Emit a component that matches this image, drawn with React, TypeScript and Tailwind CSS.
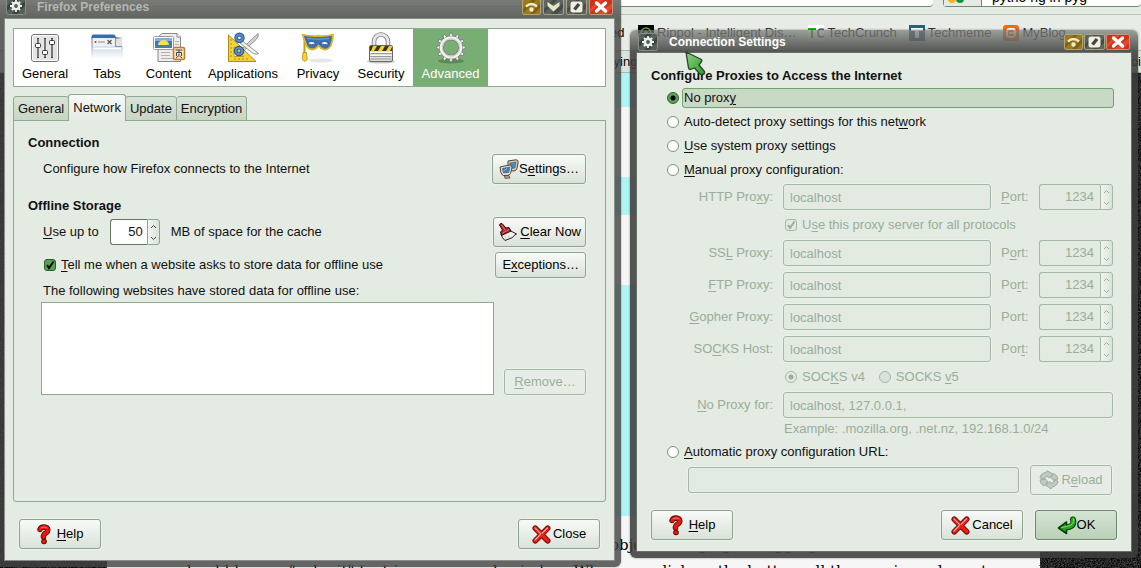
import React from 'react';

type Kids = { children?: React.ReactNode };

/* ---------- icons ---------- */

function MonitorsIcon() {
  return (
    <svg width="20" height="20" viewBox="0 0 20 20" aria-hidden="true">
      <path d="M9 2 L17 .8 Q19.5 1 19.2 3 L18 9.500 Q17 12.500 14 12 L9 11z" fill="#d5cfbd" stroke="#4b463c" />
      <path d="M11 4 L17 3 L16 9 L11 9.500z" fill="#4d88bd" stroke="#57606a" strokeWidth=".7" />
      <path d="M1 8 L10.500 6 Q13.500 6 13 9 L11.500 14.500 Q10.500 16.500 8 16.500 L4.500 16.500 Q2.500 16 1.800 13z" fill="#e6e0cf" stroke="#4b463c" />
      <path d="M3.300 9.500 L11 8 L9.700 13.500 L4.500 14z" fill="#3f7fbb" stroke="#57606a" strokeWidth=".7" />
      <path d="M5.500 17 L10 16.500 L11 19 L6 19.300z" fill="#b5ae9a" stroke="#4b463c" strokeWidth=".8" />
      <path d="M4.500 12 L8 9.500" stroke="#8cb8df" />
    </svg>
  );
}

function BrushIcon() {
  return (
    <svg width="20" height="20" viewBox="0 0 20 20" aria-hidden="true">
      <path d="M3 12 L11 8 L18.500 12 Q16 13 14.500 15.500 L7 18.500 Q4 16 3 12z" fill="#f3f0ee" stroke="#1c1a1a" />
      <path d="M1.500 3 Q2 1 4 1.500 L8 6 L11 5.500 L13 9 L3.500 13.500 L2.500 10 L4.500 8z" fill="#b3262b" stroke="#1d0b0b" />
      <path d="M3.500 3 L7 8 M4.500 11 L11 7.500" stroke="#e0726f" />
      <path d="M7 14 l1 3 M10 13 l1 3" stroke="#c9c2c2" />
    </svg>
  );
}

function HelpIcon() {
  const hook = 'M3 5.500Q4 3 7 3Q11 3.200 10.800 6Q10.500 8.500 8 9.500Q6 11 6.500 13';
  return (
    <svg width="14" height="21" viewBox="0 0 14 21" aria-hidden="true">
      <g fill="none" strokeLinecap="round">
        <path d={hook} stroke="#4a0805" strokeWidth="5.400" />
        <circle cx="7" cy="17.500" r="2.800" fill="#4a0805" />
        <path d={hook} stroke="#f0150d" strokeWidth="3.600" />
        <circle cx="7" cy="17.500" r="1.900" fill="#f0150d" />
        <path d="M4 3.800Q7 1.700 10 3.800" stroke="#ff8a7c" strokeWidth=".9" />
      </g>
    </svg>
  );
}

function CrossIcon() {
  return (
    <svg width="19" height="19" viewBox="0 0 19 19" aria-hidden="true">
      <path d="M3.300 3.300 L15.700 15.700 M15.700 3.300 L3.300 15.700" stroke="#5a0a06" strokeWidth="5.600" strokeLinecap="round" />
      <path d="M3.300 3.300 L15.700 15.700 M15.700 3.300 L3.300 15.700" stroke="#ea1d12" strokeWidth="4" strokeLinecap="round" />
      <path d="M3 2.800 L8.500 8.300 M15.500 2.800 L10 8.300 M8.300 9.700 L3 15" stroke="#ffb3a8" strokeWidth="1.100" strokeLinecap="round" />
    </svg>
  );
}

function ReturnIcon() {
  return (
    <svg width="20" height="19" viewBox="0 0 20 19" aria-hidden="true">
      <g fill="none" strokeLinejoin="round" strokeLinecap="round">
        <path d="M16 3.500Q18 10.500 9.500 11.500" stroke="#0d3c0a" strokeWidth="6" />
        <path d="M9.500 6L1.500 12L9.500 17.500z" fill="#24a51b" stroke="#0d3c0a" strokeWidth="1.600" />
        <path d="M16 3.500Q18 10.500 8.500 11.500" stroke="#24a51b" strokeWidth="4.200" />
        <path d="M16.500 2.500Q18 9.500 9.500 10.500L4.500 11.500" stroke="#7fdc70" />
      </g>
    </svg>
  );
}

function ReloadIcon() {
  return (
    <svg width="20" height="20" viewBox="0 0 20 20" aria-hidden="true">
      <g fill="#c2c9c1" stroke="#a0aa9f" strokeLinejoin="round">
        <path d="M1 8 Q1.500 3 7 2.500 L8 .8 L14 4 L9.500 8 L8.500 6 Q6 6.500 5.500 9z" />
        <path d="M19 11 Q18.500 16 13 17 L12 19 L6.500 15 L11 11.500 L12 13.500 Q14.500 13 15 10.500z" />
        <path d="M1 10 L6.500 9 L9 12 Q7 12.500 7.500 14 L4.500 16 Q1.500 14 1 10z" />
        <path d="M14.500 3.500 Q18.500 5 19 9 L14.500 10 L11.500 7.500z" />
      </g>
    </svg>
  );
}

function SlidersIcon() {
  return (
    <svg width="32" height="32" viewBox="0 0 32 32" aria-hidden="true">
      <rect x="2.500" y="2.500" width="27" height="27" rx="2.500" fill="#e4e4e2" stroke="#777" />
      <rect x="3.500" y="3.500" width="25" height="25" rx="1.500" fill="none" stroke="#fff" />
      <path d="M9 6v20 M16 6v20 M23 6v20" stroke="#444" strokeWidth="2" />
      <path d="M9 7v18 M16 7v18 M23 7v18" stroke="#ddd" strokeWidth=".7" />
      <rect x="6.500" y="11.500" width="5" height="4" rx="1" fill="#fff" stroke="#333" />
      <rect x="13.500" y="18.500" width="5" height="4" rx="1" fill="#fff" stroke="#333" />
      <rect x="20.500" y="8.500" width="5" height="4" rx="1" fill="#fff" stroke="#333" />
    </svg>
  );
}

function TabsIcon() {
  return (
    <svg width="32" height="32" viewBox="0 0 32 32" aria-hidden="true">
      <defs>
        <linearGradient id="tabSide" x1="0" y1="0" x2="1" y2="0">
          <stop offset="0" stopColor="#777" />
          <stop offset="1" stopColor="#fff" />
        </linearGradient>
        <linearGradient id="tabPage" x1="0" y1="0" x2="0" y2="1">
          <stop offset="0" stopColor="#e9eef4" />
          <stop offset=".5" stopColor="#d2dfee" />
          <stop offset="1" stopColor="#fff" />
        </linearGradient>
        <linearGradient id="tabEdge" x1="0" y1="0" x2="0" y2="1">
          <stop offset="0" stopColor="#5a6f8c" />
          <stop offset="1" stopColor="#fff" />
        </linearGradient>
      </defs>
      <path d="M24 5h8v10h-8z" fill="url(#tabSide)" />
      <path d="M25 7h6v7h-6z" fill="#e2e2e0" />
      <path d="M.5 5h23.500v9.500H32V27H.5z" fill="url(#tabPage)" />
      <path d="M.5 5h1v22h-1z" fill="url(#tabEdge)" />
      <path d="M24.500 5v9.500H31" fill="none" stroke="#8593a5" />
      <path d="M.5 6V4.500q0-2 2-2h20q2 0 2.500 3.500z" fill="#3a6cab" />
      <path d="M2 7h21.500v7H2z" fill="#f0f1f2" />
      <circle cx="4.500" cy="10" r="1.100" fill="#c33" />
      <path d="M7 10h7" stroke="#aaa" strokeWidth="1.500" />
      <path d="M16.500 8l4 4m0-4l-4 4" stroke="#555" strokeWidth="1.200" />
      <path d="M2 16.500h28" stroke="#fff" strokeWidth="1.500" />
    </svg>
  );
}

function ContentIcon() {
  return (
    <svg width="34" height="32" viewBox="0 0 34 32" aria-hidden="true">
      <path d="M10 1.500H25L28.500 5V29.500H6V5z" fill="#ededeb" stroke="#888" />
      <path d="M25 1.500V5h3.500" fill="#fff" stroke="#888" />
      <path d="M9 20.500h9 M9 23.500h9 M9 26.500h13 M23 9.500h4 M23 12.500h4 M9 17.500h15" stroke="#b0b0ae" />
      <rect x="1.500" y="4.500" width="20" height="13" rx="1" fill="#fff" stroke="#9a9a9a" />
      <rect x="3" y="6" width="17" height="10" fill="#3c78bd" />
      <path d="M3 6h17v3H3z" fill="#7fb0df" />
      <path d="M6 13a5.500 5 0 0 1 11 0z" fill="#f3e04a" />
      <path d="M3 13h17v3H3z" fill="#4f79a8" />
      <rect x="21.500" y="15.500" width="11" height="12" rx="1.500" fill="#f6e3c5" stroke="#c87a1e" strokeWidth="1.500" />
      <path d="M23.500 18h7 M27 18v2 M24.500 20.500h5v3.500 M24.500 20.500V24 M27 21.500v2l-3 2.500 M27.500 24l2.500 2" stroke="#444" fill="none" />
    </svg>
  );
}

function ApplicationsIcon() {
  return (
    <svg width="32" height="32" viewBox="0 0 32 32" aria-hidden="true">
      <path d="M1.500 3V29.500H29z" fill="#f3d338" stroke="#ad8a12" />
      <path d="M7 15V24.500H17z" fill="#fff" stroke="#c19e1b" />
      <path d="M3 8h2M3 12h2M3 16h2M3 20h2M3 24h2M8 28v-2M12 28v-2M16 28v-2M20 28v-2" stroke="#ad8a12" />
      <path d="M14 17.500L31 1.500Q32.500 5 27 9.500L16 19.500z" fill="#d4d4d2" stroke="#777" strokeWidth=".8" />
      <path d="M14 8L31.500 21.500Q28 23.500 23 19L13 11z" fill="#f3f3f1" stroke="#777" strokeWidth=".8" />
      <circle cx="12.500" cy="5.800" r="3.300" fill="none" stroke="#234a86" strokeWidth="3.800" />
      <circle cx="12.500" cy="5.800" r="3.300" fill="none" stroke="#5e8ecb" strokeWidth="2" />
      <circle cx="12" cy="19" r="3.300" fill="none" stroke="#234a86" strokeWidth="3.800" />
      <circle cx="12" cy="19" r="3.300" fill="none" stroke="#5e8ecb" strokeWidth="2" />
    </svg>
  );
}

function MaskIcon() {
  return (
    <svg width="34" height="32" viewBox="0 0 34 32" aria-hidden="true">
      <ellipse cx="20" cy="28.500" rx="12" ry="2" fill="#e6e6e6" />
      <path d="M3.500 6V22" stroke="#c49d13" strokeWidth="2" />
      <path d="M2 20.500h3.500l.8 7-2.500 2-2.500-2z" fill="#f3d338" stroke="#b08e12" strokeWidth=".8" />
      <path d="M1.500 2.500Q8 4.500 17 4Q26 4.500 32 2.500Q32 8 30 13Q28 18 23 17.500Q19.500 16.500 17.500 13.500Q15 17.500 11 17.500Q6 17 4.500 11z" fill="#3f6fb3" stroke="#dcb821" strokeWidth="1.800" strokeLinejoin="round" />
      <path d="M6.500 11.500Q10.500 7.500 15 11.500Q10.500 14 6.500 11.500z M19.500 11.500Q23.500 7.500 28 11.500Q24 14 19.500 11.500z" fill="#fff" stroke="#234a86" strokeWidth=".8" />
      <path d="M6 6.500Q17 8 28 6.500" stroke="#7ba3d8" fill="none" />
    </svg>
  );
}

function PadlockIcon() {
  return (
    <svg width="32" height="32" viewBox="0 0 32 32" aria-hidden="true">
      <ellipse cx="16" cy="29.500" rx="14" ry="2" fill="#c9c9c7" />
      <path d="M9 15V9.500a7 7 0 0 1 14 0V15" fill="none" stroke="#777" strokeWidth="4.600" />
      <path d="M9 15V9.500a7 7 0 0 1 14 0V15" fill="none" stroke="#e6e6e4" strokeWidth="3" />
      <rect x="4.500" y="13.500" width="23" height="16" rx="1.500" fill="#dededc" stroke="#666" />
      <rect x="5" y="14" width="22" height="5" fill="#f4d31f" />
      <path d="M5 14h3l-2 5H5zM12 14h4l-3 5h-4zM20 14h4l-3 5h-4zM27 15v4h-2z" fill="#3a3320" />
      <path d="M5.500 21.500h21M5.500 24.500h21M5.500 27h21" stroke="#999" />
      <path d="M5.500 20.500h21M5.500 23.500h21" stroke="#fff" />
    </svg>
  );
}

const teeth = [0, 30, 60, 90, 120, 150, 180, 210, 240, 270, 300, 330];

function GearIcon() {
  return (
    <svg width="32" height="32" viewBox="0 0 32 32" aria-hidden="true">
      <ellipse cx="16" cy="29" rx="13" ry="2.500" fill="#5a8a55" />
      {teeth.map((a) => (
        <path key={a} d="M13.800 5.500L15 1.200h2l1.200 4.300z" fill="#f1f1ef" stroke="#777" strokeWidth=".8" transform={`rotate(${a} 16 15.500)`} />
      ))}
      <circle cx="16" cy="15.500" r="9.500" fill="none" stroke="#777" strokeWidth="4.400" />
      <circle cx="16" cy="15.500" r="9.700" fill="none" stroke="#f1f1ef" strokeWidth="3.200" />
      <circle cx="16" cy="15.500" r="8.700" fill="none" stroke="#c4c4c2" />
    </svg>
  );
}

function WindowMenuIcon() {
  return (
    <svg width="20" height="18" viewBox="0 0 20 18" aria-hidden="true">
      <rect x=".5" y=".5" width="19" height="17" rx="2" fill="#56605a" stroke="#85918a" />
      <path d="M1 9L9 1h5L1 14zM6 17L19 4v5l-8 8z" fill="#38413b" />
      <circle cx="10" cy="9" r="3.200" fill="none" stroke="#eef0ea" strokeWidth="2.400" />
      <path d="M10 3v2.500M10 12.500V15M4 9h2.500M13.500 9H16M5.800 4.800l1.700 1.700M12.500 11.500l1.700 1.700M14.200 4.800l-1.700 1.700M7.500 11.500l-1.700 1.700" stroke="#eef0ea" strokeWidth="1.800" />
    </svg>
  );
}

type FrameAction = 'Shade' | 'Minimize' | 'Maximize' | 'Close';

function FrameButton({ action }: { action: FrameAction }) {
  const gray = action === 'Minimize' || action === 'Maximize';
  const fill = action === 'Shade' ? '#9a7a1c' : action === 'Close' ? '#cf3018' : '#5b645f';
  const dark = action === 'Shade' ? '#7d6110' : action === 'Close' ? '#e2492d' : '#444c48';
  const width = action === 'Close' ? 24 : gray ? 21 : 19;
  const mid = width / 2;
  return (
    <button type="button" aria-label={action} className="flex">
      <svg width={width} height="16" viewBox={`0 0 ${width} 16`} aria-hidden="true">
        <rect x=".5" y=".5" width={width - 1} height="15" rx="1.500" fill={fill} stroke="#c3b98f" strokeOpacity=".7" />
        <path d={`M1 10L10 1h4L1 14zM8 15L${width - 1} 4v5l-6 6z`} fill={dark} />
        {action === 'Shade' && (
          <g fill="none" stroke="#f2edcf" strokeWidth="2.400">
            <path d={`M${mid - 5.5} 7.500Q${mid} 2.500 ${mid + 5.5} 7.500`} />
            <circle cx={mid} cy="10.500" r="1" />
          </g>
        )}
        {action === 'Minimize' && <path d={`M${mid - 6} 3L${mid} 7L${mid + 6} 3V7L${mid} 12.500L${mid - 6} 7z`} fill="#e8e5c4" />}
        {action === 'Maximize' && (
          <g>
            <rect x={mid - 6} y="2.500" width="12" height="11" rx="2.500" fill="#f0efe0" />
            <path d={`M${mid - 2} 10.500L${mid + 2.5} 5`} stroke="#444" strokeWidth="3.400" />
          </g>
        )}
        {action === 'Close' && <path d={`M${mid - 4.5} 4L${mid + 4.5} 12M${mid + 4.5} 4L${mid - 4.5} 12`} stroke="#fff" strokeWidth="3.400" strokeLinecap="round" />}
      </svg>
    </button>
  );
}

function Pointer() {
  return (
    <svg className="absolute left-[684px] top-[50px]" width="24" height="28" viewBox="0 0 24 28" aria-hidden="true">
      <defs>
        <linearGradient id="pointerFill" x1="0" y1="0" x2="1" y2="1">
          <stop offset="0" stopColor="#8fd08a" />
          <stop offset="1" stopColor="#25a01f" />
        </linearGradient>
      </defs>
      <path d="M2 2L17.500 9.500Q18.500 10.500 17.500 11.500L15 15L20.500 21.500Q21 23.500 18.500 24.500Q16 25 15 23L10.500 18L6.500 19.500Q5 19.500 4.500 18z" fill="url(#pointerFill)" stroke="#2e3f2d" strokeWidth="1.300" strokeLinejoin="round" />
    </svg>
  );
}

/* ---------- controls ---------- */

function U({ children }: Kids) {
  return <span className="underline underline-offset-2">{children}</span>;
}

type PushProps = Kids & { icon?: React.ReactNode; tone?: 'normal' | 'default' | 'disabled'; short?: boolean; tight?: boolean };

function PushButton({ icon, tone = 'normal', short, tight, children }: PushProps) {
  const look = {
    normal: 'border-[#8fa48f] bg-linear-to-b from-[#f8faf7] via-[#e9eee8] to-[#d9e2d8] text-black',
    default: 'border-[#6d8a6c] bg-linear-to-b from-[#d5e4d3] via-[#c8dac6] to-[#b9d0b6] text-black',
    disabled: 'border-[#a5b8a4] bg-[#e7ede6] text-[#9aad99]',
  }[tone];
  return (
    <button
      type="button"
      disabled={tone === 'disabled'}
      className={`flex min-w-[82px] items-center justify-center rounded-[3px] border shadow-[0_0_0_1px_rgba(240,245,240,0.6)] ${short ? 'h-[26px]' : 'h-[30px]'} ${tight ? 'px-1' : 'px-1.5'} ${look}`}
    >
      {icon}
      <span className="whitespace-nowrap">{children}</span>
    </button>
  );
}

function Arrows({ disabled }: { disabled?: boolean }) {
  const tone = disabled ? 'border-[#a5b8a4] text-[#9aad99]' : 'border-[#8fa48f] text-[#444]';
  return (
    <span className={`flex w-[13px] shrink-0 flex-col rounded-r-[3px] border bg-linear-to-r from-[#f1f5f0] to-[#d9e2d8] ${tone}`}>
      {['Increase', 'Decrease'].map((name, i) => (
        <button key={name} type="button" aria-label={name} disabled={disabled} className="flex flex-1 items-center justify-center">
          <svg width="7" height="5" viewBox="0 0 7 5" aria-hidden="true">
            <path d={i === 0 ? 'M1 4L3.500 1.500L6 4' : 'M1 1L3.500 3.500L6 1'} fill="none" stroke="currentColor" />
          </svg>
        </button>
      ))}
    </span>
  );
}

function CheckBox({ id, disabled }: { id: string; disabled?: boolean }) {
  return (
    <span className="relative flex size-3">
      <input
        id={id}
        type="checkbox"
        defaultChecked
        disabled={disabled}
        className="size-3 appearance-none rounded-[3px] border border-[#2f5c2d] bg-[#55a552] disabled:border-[#a5b8a4] disabled:bg-[#e1e9e0]"
      />
      <svg className="pointer-events-none absolute inset-0" width="12" height="12" viewBox="0 0 12 12" aria-hidden="true">
        <path d="M3 6L5 9L9.500 2.500" fill="none" stroke={disabled ? '#9aad99' : '#000'} strokeWidth="2" />
      </svg>
    </span>
  );
}

function Radio({ id, name, checked, disabled }: { id: string; name: string; checked?: boolean; disabled?: boolean }) {
  return (
    <input
      id={id}
      name={name}
      type="radio"
      defaultChecked={checked}
      disabled={disabled}
      className="size-3 shrink-0 appearance-none rounded-full border border-[#7c937b] bg-white checked:border-[#2f5c2d] checked:bg-[radial-gradient(circle,#000_0_2px,#5aa556_3px)] disabled:border-[#a5b8a4] disabled:bg-[#d9e3d8] disabled:checked:border-[#a5b8a4] disabled:checked:bg-[radial-gradient(circle,#9aad99_0_2px,#e4ebe3_3px)]"
    />
  );
}

const field = 'h-[26px] w-full min-w-0 rounded-[3px] border border-[#a5b8a4] bg-[#e3eae2] px-1.5 text-[#9aad99] shadow-[0_0_0_1px_rgba(240,245,240,0.6)]';

function ProxyRow({ id, label, portLabel }: { id: string; label: React.ReactNode; portLabel: React.ReactNode }) {
  return (
    <>
      <label htmlFor={id} className="text-right">{label}</label>
      <input id={id} disabled defaultValue="localhost" className={field} />
      <label htmlFor={`${id}-port`}>{portLabel}</label>
      <span className="flex h-[26px]">
        <input
          id={`${id}-port`}
          disabled
          defaultValue="1234"
          className="w-full min-w-0 rounded-l-[3px] border border-r-0 border-[#a5b8a4] bg-[#e3eae2] pr-1.5 text-right"
        />
        <Arrows disabled />
      </span>
    </>
  );
}

/* ---------- desktop background ---------- */

function Bookmark({ icon, children }: Kids & { icon: React.ReactNode }) {
  return (
    <a href="#bookmark" className="flex items-center gap-[3px] whitespace-nowrap">
      {icon}
      {children}
    </a>
  );
}

function Browser() {
  return (
    <div className="relative text-[13px] text-[#333]">
      <div className="flex h-[7px] gap-2.5 overflow-hidden bg-[#e4ebe3]">
        <div className="w-[933px] shrink-0 rounded-b border-b border-[#6f8a6e] bg-white" />
        <div className="flex flex-1 items-start rounded-b border-b border-l border-[#6f8a6e] bg-white leading-[10px] text-black">
          <svg width="38" height="6" viewBox="0 0 38 6" aria-hidden="true">
            <path d="M0 0h38v6H0z" fill="#e4ebe3" />
            <circle cx="8" cy="-1" r="4" fill="#f5b021" />
            <circle cx="16" cy="-1" r="4" fill="#17903b" />
            <path d="M37.500 0v6" stroke="#6f8a6e" />
          </svg>
          <span className="-mt-2 ml-2.5 text-[14px]">pytho ng in pyg</span>
        </div>
      </div>
      <div className="h-[8px] border-b border-[#b5c4b4] bg-[#e4ebe3]" />
      <div className="flex h-[36px] items-center border-b border-[#a8baa7] bg-[#e7ede6] pl-[610px]">
        <span className="w-7 text-black">ed</span>
        <div className="flex gap-3">
          <Bookmark
            icon={
              <svg width="16" height="16" viewBox="0 0 16 16" aria-hidden="true">
                <rect width="16" height="16" fill="#000" />
                <circle cx="8" cy="8" r="5" fill="none" stroke="#65a33a" strokeWidth="1.500" />
                <circle cx="8" cy="8" r="2" fill="#a85fc0" />
              </svg>
            }
          >
            Rippol - Intelligent Dis…
          </Bookmark>
          <Bookmark
            icon={
              <svg width="16" height="16" viewBox="0 0 16 16" aria-hidden="true">
                <rect width="16" height="16" fill="#fff" />
                <path d="M0 3h8v2H5v8H3V5H0z" fill="#13b613" />
                <path d="M16 4.500Q10 2.500 10 8Q10 13.500 16 11.500" fill="none" stroke="#555" strokeWidth="1.500" />
              </svg>
            }
          >
            TechCrunch
          </Bookmark>
          <Bookmark
            icon={
              <svg width="16" height="16" viewBox="0 0 16 16" aria-hidden="true">
                <rect width="16" height="16" fill="#2d5f7c" />
                <path d="M2 3h12v3h-4v7H6V6H2z" fill="#fff" />
              </svg>
            }
          >
            Techmeme
          </Bookmark>
          <Bookmark
            icon={
              <svg width="16" height="16" viewBox="0 0 16 16" aria-hidden="true">
                <rect width="16" height="16" rx="3" fill="#fb6a0a" />
                <rect x="4" y="4" width="8" height="8" rx="2.500" fill="none" stroke="#fff" strokeWidth="1.800" />
                <path d="M6 8h5" stroke="#fff" strokeWidth="1.500" />
              </svg>
            }
          >
            MyBlog
          </Bookmark>
        </div>
      </div>
      <div className="flex h-[22px] items-center justify-between border-b border-[#a8baa7] bg-[#dbe4da] pl-[610px] text-black">
        <span>fying</span>
        <span>oi</span>
      </div>
      <div className="ml-[107px] w-[933px] bg-[#f6f6f6] font-['DejaVu_Serif',serif] text-[15px] text-black">
        <div className="h-[34px] bg-[#b0f5f5]" />
        <div className="h-[70px]" />
        <div className="h-[38px] bg-[#b0f5f5]" />
        <div className="h-[70px]" />
        <div className="h-[231px] bg-[#b0f5f5]" />
        <div className="overflow-hidden pt-4 leading-[26px] whitespace-nowrap">
          <p className="pl-[503px]">object changing debugging</p>
          <p className="pl-[72px]">should have a "submit" text in your search window. When you click on the button, all the previous characters and</p>
        </div>
      </div>
    </div>
  );
}

function Grain() {
  return (
    <svg className="absolute inset-0 size-full" aria-hidden="true">
      <filter id="grain" colorInterpolationFilters="sRGB">
        <feTurbulence type="fractalNoise" baseFrequency=".7" numOctaves="2" />
        <feColorMatrix values=".6 0 0 0 -.16 .6 0 0 0 -.16 .6 0 0 0 -.16 0 0 0 0 1" />
      </filter>
      <rect width="100%" height="100%" filter="url(#grain)" />
    </svg>
  );
}

/* ---------- windows ---------- */

const categories = [
  { name: 'General', icon: <SlidersIcon /> },
  { name: 'Tabs', icon: <TabsIcon /> },
  { name: 'Content', icon: <ContentIcon /> },
  { name: 'Applications', icon: <ApplicationsIcon /> },
  { name: 'Privacy', icon: <MaskIcon /> },
  { name: 'Security', icon: <PadlockIcon /> },
  { name: 'Advanced', icon: <GearIcon /> },
];

function Preferences() {
  return (
    <section aria-label="Firefox Preferences" className="absolute left-0 top-0 w-[621px] rounded-br-md shadow-[0_0_2px_rgba(0,0,0,0.4)]">
      <header className="flex h-[19px] items-start justify-between overflow-hidden bg-linear-to-b from-[#71746f]/95 to-[#5c5d5b]/95 pl-1.5 pr-2">
        <div className="flex gap-[11px]">
          <div className="-mt-[3px]"><WindowMenuIcon /></div>
          <h1 className="text-[12px] leading-[14px] font-bold text-[#b4b7b2]">Firefox Preferences</h1>
        </div>
        <div className="-mt-px flex gap-0.5">
          <FrameButton action="Shade" />
          <FrameButton action="Minimize" />
          <FrameButton action="Maximize" />
          <FrameButton action="Close" />
        </div>
      </header>
      <div className="rounded-br-md border-t-0 border-r-[7px] border-b-[7px] border-l-[5px] border-[#424242]/80">
        <div className="bg-[#e4ebe3] bg-clip-padding px-2 pb-[11px] pt-[9px] outline outline-[#8a8c89]">
          <nav className="grid h-[59px] grid-cols-[62px_62px_61px_88px_62px_64px_75px] border border-[#8fa890] bg-white">
            {categories.map(({ name, icon }) => (
              <button
                key={name}
                type="button"
                className={`flex flex-col items-center pt-[3px] leading-5 ${name === 'Advanced' ? 'bg-[#78ad73] text-white' : 'text-black'}`}
              >
                {icon}
                {name}
              </button>
            ))}
          </nav>
          <div role="tablist" className="relative mt-[7px] flex items-end">
            {['General', 'Network', 'Update', 'Encryption'].map((tab) => (
              <button
                key={tab}
                type="button"
                role="tab"
                aria-selected={tab === 'Network'}
                className={
                  tab === 'Network'
                    ? '-mx-px h-[27px] rounded-t-[3px] border border-b-0 border-[#8fa890] bg-linear-to-b from-[#f6f9f6] to-[#e4ebe3] px-1'
                    : 'h-[25px] rounded-t-[3px] border border-[#8fa890] bg-linear-to-b from-[#d8e2d7] to-[#c8d6c6] px-1 not-first:not-nth-3:border-l-0'
                }
              >
                {tab}
              </button>
            ))}
          </div>
          <div role="tabpanel" className="-mt-px min-h-[382px] rounded-b-[3px] border border-[#8fa890] pb-4 pl-3.5 pr-[19px] pt-3 leading-5">
            <h2 className="font-bold">Connection</h2>
            <div className="flex items-center justify-between pl-[15px] pt-px">
              <p>Configure how Firefox connects to the Internet</p>
              <PushButton icon={<MonitorsIcon />}>S<U>e</U>ttings…</PushButton>
            </div>
            <h2 className="mt-3 font-bold">Offline Storage</h2>
            <div className="flex items-center pl-[15px] pt-px">
              <label htmlFor="cache"><U>U</U>se up to</label>
              <span className="ml-[11px] mr-[11px] flex h-[26px] w-[50px]">
                <input id="cache" defaultValue="50" className="w-full min-w-0 rounded-l-[3px] border border-r-0 border-[#5f7a5e] bg-white pr-1 text-right" />
                <Arrows />
              </span>
              <span className="flex-1">MB of space for the cache</span>
              <PushButton tight icon={<BrushIcon />}><span className="ml-0.5"><U>C</U>lear Now</span></PushButton>
            </div>
            <div className="flex items-center justify-between pl-4 pt-[5px]">
              <span className="flex items-center gap-[5px]">
                <CheckBox id="ask" />
                <label htmlFor="ask"><U>T</U>ell me when a website asks to store data for offline use</label>
              </span>
              <PushButton short>E<U>x</U>ceptions…</PushButton>
            </div>
            <p className="pl-[15px] pt-[3px]">The following websites have stored data for offline use:</p>
            <div className="flex items-end gap-2.5 pl-[13px] pt-px">
              <div role="listbox" aria-label="Websites with stored data" className="h-[93px] flex-1 border border-[#8fa890] bg-white" />
              <PushButton short tone="disabled"><U>R</U>emove…</PushButton>
            </div>
          </div>
          <footer className="mt-[17px] flex justify-between px-1.5">
            <PushButton icon={<HelpIcon />}><span className="ml-1.5"><U>H</U>elp</span></PushButton>
            <PushButton icon={<CrossIcon />}><span className="ml-0.5">Close</span></PushButton>
          </footer>
        </div>
      </div>
    </section>
  );
}

const modes = [
  { id: 'none', label: <>No prox<U>y</U></> },
  { id: 'detect', label: <>Auto-detect proxy settings for this net<U>w</U>ork</> },
  { id: 'system', label: <><U>U</U>se system proxy settings</> },
  { id: 'manual', label: <><U>M</U>anual proxy configuration:</> },
];

function ConnectionSettings() {
  return (
    <section aria-label="Connection Settings" className="absolute left-[630px] top-[30px] w-[508px] rounded-md shadow-[0_0_2px_rgba(0,0,0,0.5)]">
      <header className="flex h-[23px] items-center justify-between rounded-t-md bg-linear-to-b from-[#7b7e79]/70 via-[#5f615e]/85 to-[#4a4b49]/95 pl-2 pr-2">
        <div className="flex items-center gap-[11px]">
          <WindowMenuIcon />
          <h1 className="text-[12px] font-bold text-white">Connection Settings</h1>
        </div>
        <div className="flex gap-px">
          <FrameButton action="Shade" />
          <FrameButton action="Maximize" />
          <FrameButton action="Close" />
        </div>
      </header>
      <div className="rounded-b-md border-x-[7px] border-b-[7px] border-[#3e3e3e]/88">
        <div className="bg-[#e4ebe3] px-3.5 pb-[11px] pt-[13px] leading-5 outline outline-[#6c6e6b]">
          <h2 className="font-bold">Configure Proxies to Access the Internet</h2>
          {modes.map(({ id, label }) => (
            <div key={id} className="flex h-6 items-center gap-[3px] pl-4 pr-[3px]">
              <Radio id={id} name="mode" checked={id === 'none'} />
              <label
                htmlFor={id}
                className={`flex-1 rounded-[3px] border px-px leading-[18px] ${id === 'none' ? 'border-[#6fa56c] bg-[#c8d9c5]' : 'border-transparent'}`}
              >
                {label}
              </label>
            </div>
          ))}
          <div className="mt-0.5 grid grid-cols-[122px_1fr_28px_74px] items-center gap-x-2.5 gap-y-1.5 pr-1 text-[#9aad99]">
            <ProxyRow id="http" label={<>HTTP Pro<U>x</U>y:</>} portLabel={<><U>P</U>ort:</>} />
            <div className="col-span-3 col-start-2 flex h-[18px] items-center gap-[5px] pl-0.5">
              <CheckBox id="all" disabled />
              <label htmlFor="all">U<U>s</U>e this proxy server for all protocols</label>
            </div>
            <ProxyRow id="ssl" label={<>SS<U>L</U> Proxy:</>} portLabel={<>P<U>o</U>rt:</>} />
            <ProxyRow id="ftp" label={<><U>F</U>TP Proxy:</>} portLabel={<>Po<U>r</U>t:</>} />
            <ProxyRow id="gopher" label={<><U>G</U>opher Proxy:</>} portLabel={<>Port:</>} />
            <ProxyRow id="socks" label={<>SO<U>C</U>KS Host:</>} portLabel={<>Por<U>t</U>:</>} />
            <div className="col-span-3 col-start-2 flex h-[18px] items-center gap-[5px] pl-0.5">
              <Radio id="v4" name="socks" checked disabled />
              <label htmlFor="v4" className="mr-[9px]">SOC<U>K</U>S v4</label>
              <Radio id="v5" name="socks" disabled />
              <label htmlFor="v5">SOCKS <U>v</U>5</label>
            </div>
            <label htmlFor="exclude" className="text-right"><U>N</U>o Proxy for:</label>
            <div className="col-span-3 flex">
              <input id="exclude" disabled defaultValue="localhost, 127.0.0.1," className={field} />
            </div>
          </div>
          <p className="pl-[133px] leading-[22px] text-[#9aad99]">Example: .mozilla.org, .net.nz, 192.168.1.0/24</p>
          <div className="flex h-[23px] items-center gap-[5px] pl-4">
            <Radio id="auto" name="mode" />
            <label htmlFor="auto"><U>A</U>utomatic proxy configuration URL:</label>
          </div>
          <div className="flex items-center gap-[11px] pl-[37px] pr-[5px] pt-0.5">
            <input aria-label="Automatic proxy configuration URL" disabled className={field} />
            <PushButton tone="disabled" icon={<ReloadIcon />}><span className="ml-0.5">R<U>e</U>load</span></PushButton>
          </div>
          <footer className="mt-[15px] flex gap-3">
            <PushButton icon={<HelpIcon />}><span className="ml-1.5"><U>H</U>elp</span></PushButton>
            <span className="flex-1" />
            <PushButton icon={<CrossIcon />}><span className="ml-0.5">Cancel</span></PushButton>
            <PushButton tone="default" icon={<ReturnIcon />}>OK</PushButton>
          </footer>
        </div>
      </div>
    </section>
  );
}

export default function App() {
  return (
    <main className="relative h-screen overflow-hidden bg-[#222] font-['Liberation_Sans',Arial,sans-serif] text-[13px] text-[#111]">
      <Grain />
      <Browser />
      <Preferences />
      <ConnectionSettings />
      <Pointer />
    </main>
  );
}
